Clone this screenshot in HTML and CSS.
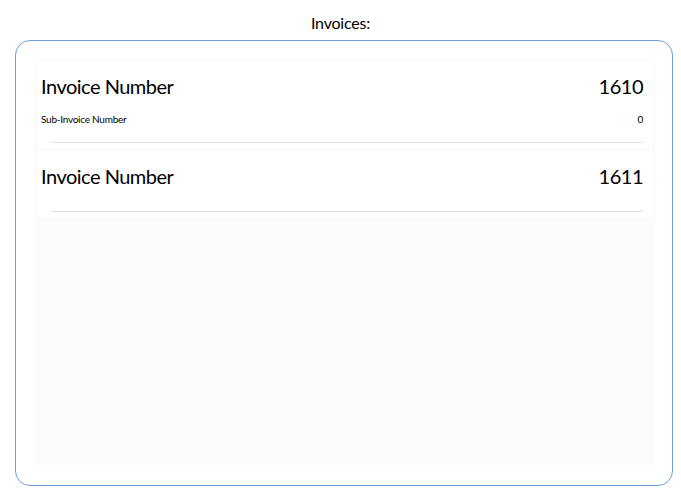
FILE: index.html
```html
<!DOCTYPE html>
<html>
<head>
<meta charset="utf-8">
<link rel="stylesheet" href="styles.css">
</head>
<body>
<div class="title">Invoices:</div>
<div class="panel">
  <div class="list">
    <div class="item">
      <div class="row main"><span>Invoice Number</span><span>1610</span></div>
      <div class="row sub"><span>Sub-Invoice Number</span><span>0</span></div>
      <div class="sep"></div>
    </div>
    <div class="item">
      <div class="row main"><span>Invoice Number</span><span>1611</span></div>
      <div class="sep"></div>
    </div>
  </div>
</div>
</body>
</html>
```
FILE: styles.css
```css
html, body {
  margin: 0;
  background: #fff;
  font-family: Lato, "Open Sans", "Liberation Sans", sans-serif;
  color: #000;
}
.title {
  text-align: center;
  font-size: 16px;
  height: 40px;
  line-height: 46px;
  letter-spacing: -0.2px;
}
.panel {
  margin: 0 8px 0 15px;
  border: 1px solid #6a9fdc;
  border-radius: 15px;
  padding: 18px 18px 19px 19px;
  box-sizing: border-box;
  height: 446px;
}
.list {
  background: #fcfcfc;
  height: 100%;
  box-sizing: border-box;
}
.item {
  background: #fff;
  border: 1px solid #f6f6f6;
  border-bottom: none;
  padding: 0 10px 6px 5px;
}
.row {
  display: flex;
  justify-content: space-between;
}
.main {
  font-size: 20px;
  padding-top: 12px;
  line-height: 28px;
  letter-spacing: -0.5px;
}
.item + .item .main {
  padding-top: 12px;
}
.sub {
  font-size: 10px;
  margin-top: 12px;
  line-height: 14px;
  letter-spacing: -0.25px;
}
.sep {
  height: 1px;
  background: #e2e2e2;
  margin: 16px 0 0 10px;
}
.item + .item .sep {
  margin-top: 21px;
}
```
